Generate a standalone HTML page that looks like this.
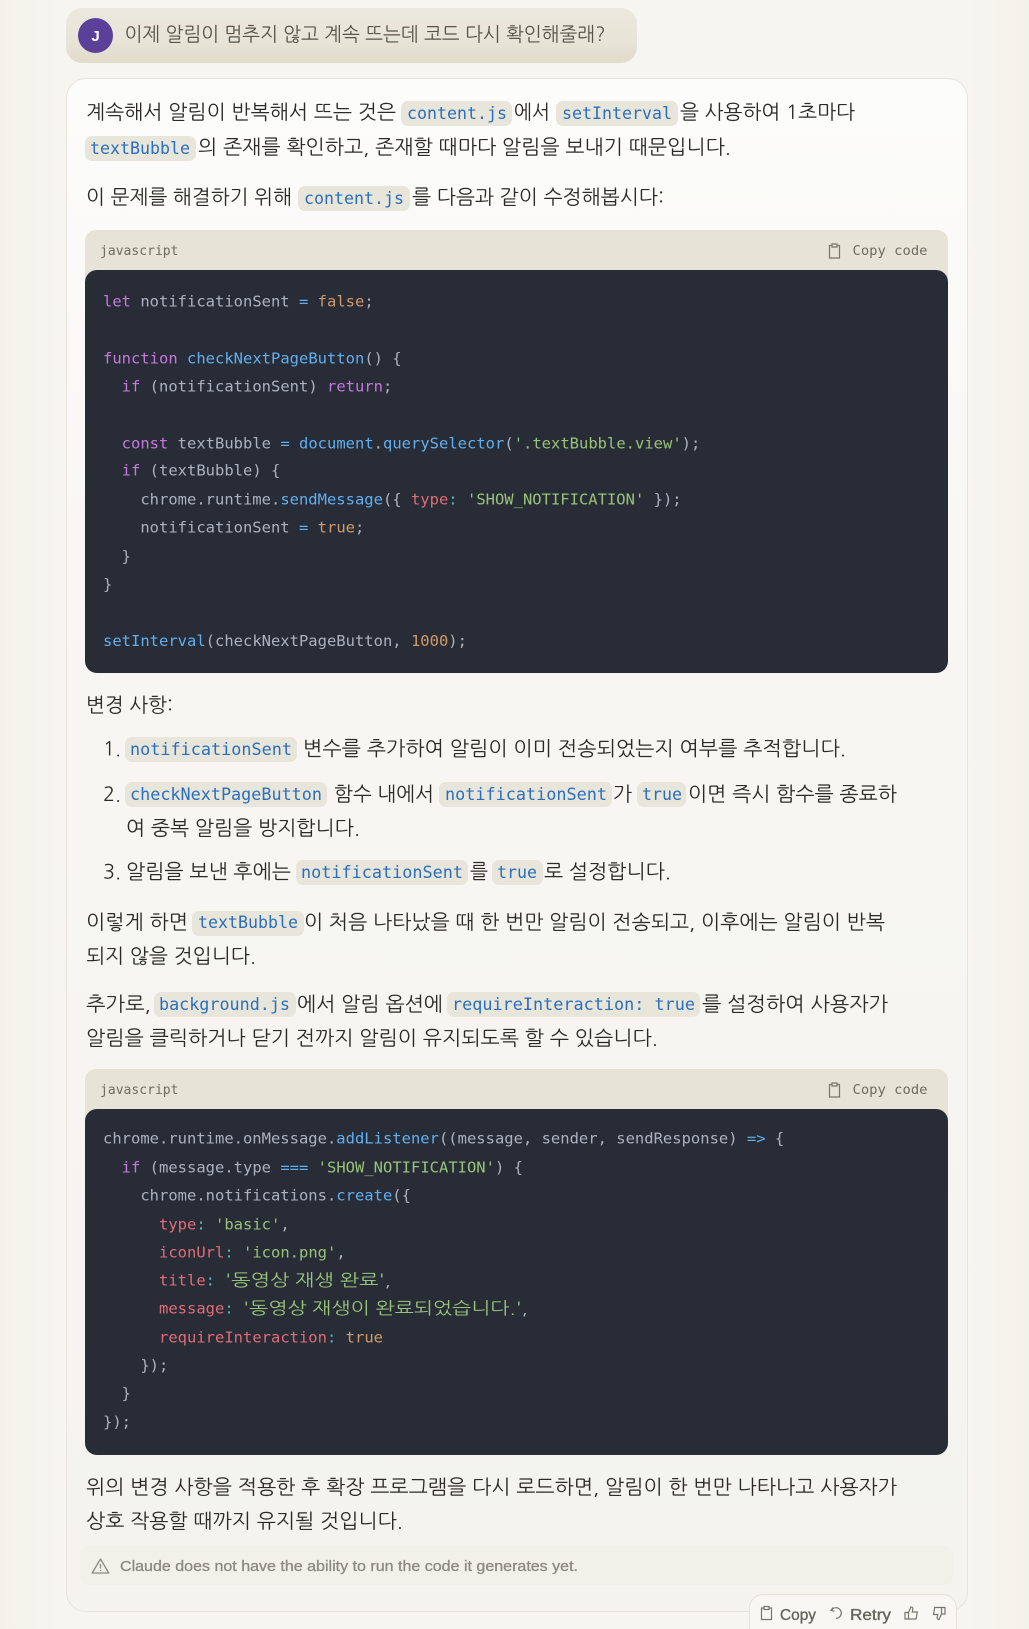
<!DOCTYPE html>
<html lang="ko"><head><meta charset="utf-8"><title>Claude</title>
<style>
html,body{margin:0;padding:0;width:1029px;height:1629px;overflow:hidden;background:#f5f4ee}
#wrap{position:relative;width:1029px;height:1629px;overflow:hidden}
.abs{position:absolute;box-sizing:border-box}
#bg{left:0;top:0;width:1029px;height:1629px;background:linear-gradient(90deg,#f3f2ea 0,#f6f5f0 6%,#f6f5f0 94%,#f3f2ea 100%)}
#bub{left:66px;top:8px;width:571px;height:55px;border-radius:16px;background:linear-gradient(180deg,#ebe8de 0,#e8e4d8 60%,#e0dbca 100%)}
#ava{left:78px;top:18px;width:35px;height:35px;border-radius:50%;background:#5a4099}
#card{left:66px;top:78px;width:902px;height:1534px;border-radius:20px;border:1px solid #e6e4dc;background:linear-gradient(180deg,#fcfcfa 0,#f8f7f4 30%,#f4f3ee 100%)}
.hd{left:85px;width:863px;background:#e7e3d7;border-radius:11px 11px 0 0;height:50px}
.cd{left:85px;width:863px;background:#282c36;border-radius:12px}
.p{position:absolute;background:#e8e5da;border-radius:7px;height:25px}
#warn{left:80px;top:1546px;width:873px;height:39px;border-radius:8px;background:#f1f0e9}
#act{left:749px;top:1594px;width:208px;height:35px;border-radius:14px 14px 0 0;border:1px solid #e3e1d8;border-bottom:0;background:#f8f7f4}
svg{position:absolute;left:0;top:0}
.k{font-family:"NanumGothic","Liberation Sans","Noto Sans CJK KR",sans-serif;font-size:20px;fill:#2b2a26}
.m{font-family:"DejaVu Sans Mono",monospace;font-size:16.5px;fill:#2a6fbd}
.c{font-family:"DejaVu Sans Mono",monospace;font-size:15.5px;fill:#abb2bf;white-space:pre}
.h{font-family:"NanumGothic","Noto Sans CJK KR",sans-serif;font-size:17px;fill:#98c379}
.l{font-family:"DejaVu Sans Mono",monospace;font-size:13px;fill:#6e6d63}
.a{fill:#c678dd}.b{fill:#61afef}.s{fill:#98c379}.n{fill:#d19a66}.r{fill:#e06c75}.o{fill:#56b6c2}
.i{fill:none;stroke:#77766c;stroke-width:1.2}
.t{font-family:"Liberation Sans",sans-serif;font-size:15.5px;fill:#65645c;stroke:#65645c;stroke-width:.35}
</style></head><body><div id="wrap">
<div class="abs" id="bg"></div>
<div class="abs" id="bub"></div>
<div class="abs" id="ava"></div>
<div class="abs" id="card"></div>

<div class="abs hd" style="top:230px"></div>
<div class="abs cd" style="top:270px;height:403px"></div>
<div class="abs hd" style="top:1069px"></div>
<div class="abs cd" style="top:1109px;height:346px"></div>
<div class="abs" id="warn"></div>
<div class="abs" id="act"></div>

<div class="p" style="left:401px;top:101px;width:111px"></div>
<div class="p" style="left:556px;top:101px;width:122px"></div>
<div class="p" style="left:85px;top:136px;width:111px"></div>
<div class="p" style="left:298px;top:186px;width:112px"></div>
<div class="p" style="left:125px;top:737px;width:172px"></div>
<div class="p" style="left:125px;top:782px;width:202px"></div>
<div class="p" style="left:439px;top:782px;width:173px"></div>
<div class="p" style="left:637px;top:782px;width:49px"></div>
<div class="p" style="left:296px;top:860px;width:172px"></div>
<div class="p" style="left:492px;top:860px;width:51px"></div>
<div class="p" style="left:192px;top:911px;width:112px"></div>
<div class="p" style="left:154px;top:992px;width:142px"></div>
<div class="p" style="left:447px;top:992px;width:253px"></div>

<svg width="1029" height="1629" viewBox="0 0 1029 1629" xmlns="http://www.w3.org/2000/svg">
<text x="95.5" y="41" text-anchor="middle" style="font-family:'Liberation Sans',sans-serif;font-size:15px;font-weight:700;fill:#fff">J</text>
<text x="124.5" y="41" class="k" style="font-size:19.5px;fill:#55534a" textLength="481" lengthAdjust="spacingAndGlyphs">이제 알림이 멈추지 않고 계속 뜨는데 코드 다시 확인해줄래?</text>

<text x="86" y="119" class="k" textLength="310" lengthAdjust="spacingAndGlyphs">계속해서 알림이 반복해서 뜨는 것은</text>
<text x="407" y="119" class="m" textLength="100" lengthAdjust="spacingAndGlyphs">content.js</text>
<text x="514" y="119" class="k" textLength="36" lengthAdjust="spacingAndGlyphs">에서</text>
<text x="562" y="119" class="m" textLength="110" lengthAdjust="spacingAndGlyphs">setInterval</text>
<text x="680" y="119" class="k" textLength="175" lengthAdjust="spacingAndGlyphs">을 사용하여 1초마다</text>

<text x="90" y="154" class="m" textLength="100" lengthAdjust="spacingAndGlyphs">textBubble</text>
<text x="198" y="154" class="k" textLength="533" lengthAdjust="spacingAndGlyphs">의 존재를 확인하고, 존재할 때마다 알림을 보내기 때문입니다.</text>

<text x="86" y="204" class="k" textLength="206" lengthAdjust="spacingAndGlyphs">이 문제를 해결하기 위해</text>
<text x="304" y="204" class="m" textLength="100" lengthAdjust="spacingAndGlyphs">content.js</text>
<text x="412" y="204" class="k" textLength="252" lengthAdjust="spacingAndGlyphs">를 다음과 같이 수정해봅시다:</text>

<text x="100" y="255" class="l" textLength="78.5" lengthAdjust="spacingAndGlyphs">javascript</text>
<path class="i" d="M829.5 245.5h2.5v-1.5h5v1.500h2.500v12.500h-10z M832 245.500v1.500h5v-1.500"/>
<text x="852.500" y="255" class="l" textLength="75" lengthAdjust="spacingAndGlyphs">Copy code</text>

<g transform="translate(103,0)">
<text class="c" y="306.500"><tspan class="a">let</tspan> notificationSent <tspan class="b">=</tspan> <tspan class="n">false</tspan>;</text>
<text class="c" y="363.500"><tspan class="a">function</tspan> <tspan class="b">checkNextPageButton</tspan>() {</text>
<text class="c" y="391.500">  <tspan class="a">if</tspan> (notificationSent) <tspan class="a">return</tspan>;</text>
<text class="c" y="448.500">  <tspan class="a">const</tspan> textBubble <tspan class="b">=</tspan> <tspan class="b">document</tspan>.<tspan class="b">querySelector</tspan>(<tspan class="s">'.textBubble.view'</tspan>);</text>
<text class="c" y="475.500">  <tspan class="a">if</tspan> (textBubble) {</text>
<text class="c" y="504.500">    chrome.runtime.<tspan class="b">sendMessage</tspan>({ <tspan class="r">type</tspan><tspan class="o">:</tspan> <tspan class="s">'SHOW_NOTIFICATION'</tspan> });</text>
<text class="c" y="532.500">    notificationSent <tspan class="b">=</tspan> <tspan class="n">true</tspan>;</text>
<text class="c" y="561.500">  }</text>
<text class="c" y="589.500">}</text>
<text class="c" y="646">  <tspan class="b" dx="-18.700">setInterval</tspan>(checkNextPageButton, <tspan class="n">1000</tspan>);</text>

<text class="c" y="1143.500">chrome.runtime.onMessage.<tspan class="b">addListener</tspan>((message, sender, sendResponse) <tspan class="b">=&gt;</tspan> {</text>
<text class="c" y="1172.500">  <tspan class="a">if</tspan> (message.type <tspan class="b">===</tspan> <tspan class="s">'SHOW_NOTIFICATION'</tspan>) {</text>
<text class="c" y="1200.500">    chrome.notifications.<tspan class="b">create</tspan>({</text>
<text class="c" y="1229.500">      <tspan class="r">type</tspan><tspan class="o">:</tspan> <tspan class="s">'basic'</tspan>,</text>
<text class="c" y="1257.500">      <tspan class="r">iconUrl</tspan><tspan class="o">:</tspan> <tspan class="s">'icon.png'</tspan>,</text>
<text class="c" y="1285.500">      <tspan class="r">title</tspan><tspan class="o">:</tspan></text>
<text class="c" y="1313.500">      <tspan class="r">message</tspan><tspan class="o">:</tspan></text>
<text class="c" y="1342.500">      <tspan class="r">requireInteraction</tspan><tspan class="o">:</tspan> <tspan class="n">true</tspan></text>
<text class="c" y="1370.500">    });</text>
<text class="c" y="1398.500">  }</text>
<text class="c" y="1427">});</text>
</g>
<text x="225" y="1286" class="h" textLength="166" lengthAdjust="spacingAndGlyphs">'동영상 재생 완료'<tspan style="fill:#abb2bf">,</tspan></text>
<text x="243" y="1314" class="h" textLength="285" lengthAdjust="spacingAndGlyphs">'동영상 재생이 완료되었습니다.'<tspan style="fill:#abb2bf">,</tspan></text>

<text x="86" y="712" class="k" textLength="87" lengthAdjust="spacingAndGlyphs">변경 사항:</text>
<text x="103" y="755.500" class="k" textLength="18" lengthAdjust="spacingAndGlyphs">1.</text>
<text x="130" y="755" class="m" textLength="162" lengthAdjust="spacingAndGlyphs">notificationSent</text>
<text x="303" y="755.500" class="k" textLength="543" lengthAdjust="spacingAndGlyphs">변수를 추가하여 알림이 이미 전송되었는지 여부를 추적합니다.</text>

<text x="103" y="801" class="k" textLength="18" lengthAdjust="spacingAndGlyphs">2.</text>
<text x="130" y="800" class="m" textLength="192" lengthAdjust="spacingAndGlyphs">checkNextPageButton</text>
<text x="334" y="801" class="k" textLength="100" lengthAdjust="spacingAndGlyphs">함수 내에서</text>
<text x="445" y="800" class="m" textLength="162" lengthAdjust="spacingAndGlyphs">notificationSent</text>
<text x="613" y="801" class="k" textLength="19" lengthAdjust="spacingAndGlyphs">가</text>
<text x="642" y="800" class="m" textLength="40" lengthAdjust="spacingAndGlyphs">true</text>
<text x="688" y="801" class="k" textLength="209" lengthAdjust="spacingAndGlyphs">이면 즉시 함수를 종료하</text>
<text x="126" y="835" class="k" textLength="234" lengthAdjust="spacingAndGlyphs">여 중복 알림을 방지합니다.</text>

<text x="103" y="878.500" class="k" textLength="18" lengthAdjust="spacingAndGlyphs">3.</text>
<text x="126" y="878.500" class="k" textLength="165" lengthAdjust="spacingAndGlyphs">알림을 보낸 후에는</text>
<text x="301" y="878" class="m" textLength="162" lengthAdjust="spacingAndGlyphs">notificationSent</text>
<text x="470" y="878.500" class="k" textLength="18" lengthAdjust="spacingAndGlyphs">를</text>
<text x="497" y="878" class="m" textLength="40" lengthAdjust="spacingAndGlyphs">true</text>
<text x="544" y="878.500" class="k" textLength="127" lengthAdjust="spacingAndGlyphs">로 설정합니다.</text>

<text x="86" y="929" class="k" textLength="102" lengthAdjust="spacingAndGlyphs">이렇게 하면</text>
<text x="198" y="928" class="m" textLength="100" lengthAdjust="spacingAndGlyphs">textBubble</text>
<text x="304" y="929" class="k" textLength="581" lengthAdjust="spacingAndGlyphs">이 처음 나타났을 때 한 번만 알림이 전송되고, 이후에는 알림이 반복</text>
<text x="86" y="963" class="k" textLength="170" lengthAdjust="spacingAndGlyphs">되지 않을 것입니다.</text>

<text x="86" y="1011" class="k" textLength="65" lengthAdjust="spacingAndGlyphs">추가로,</text>
<text x="159" y="1010" class="m" textLength="131" lengthAdjust="spacingAndGlyphs">background.js</text>
<text x="297" y="1011" class="k" textLength="146" lengthAdjust="spacingAndGlyphs">에서 알림 옵션에</text>
<text x="452" y="1010" class="m" textLength="243" lengthAdjust="spacingAndGlyphs">requireInteraction: true</text>
<text x="702" y="1011" class="k" textLength="186" lengthAdjust="spacingAndGlyphs">를 설정하여 사용자가</text>
<text x="86" y="1045" class="k" textLength="572" lengthAdjust="spacingAndGlyphs">알림을 클릭하거나 닫기 전까지 알림이 유지되도록 할 수 있습니다.</text>

<text x="100" y="1094" class="l" textLength="78.500" lengthAdjust="spacingAndGlyphs">javascript</text>
<path class="i" d="M829.5 1084.500h2.500v-1.500h5v1.500h2.500v12.500h-10z M832 1084.500v1.500h5v-1.500"/>
<text x="852.500" y="1094" class="l" textLength="75" lengthAdjust="spacingAndGlyphs">Copy code</text>

<text x="86" y="1494" class="k" textLength="811" lengthAdjust="spacingAndGlyphs">위의 변경 사항을 적용한 후 확장 프로그램을 다시 로드하면, 알림이 한 번만 나타나고 사용자가</text>
<text x="86" y="1528" class="k" textLength="317" lengthAdjust="spacingAndGlyphs">상호 작용할 때까지 유지될 것입니다.</text>

<path d="M100.500 1559 L108.800 1573 H92.200 Z" fill="none" stroke="#8a897f" stroke-width="1.300" stroke-linejoin="round"/>
<path d="M100.500 1564v4.500M100.500 1570v1" stroke="#8a897f" stroke-width="1.300" fill="none"/>
<text x="120" y="1571" style="font-family:'Liberation Sans',sans-serif;font-size:15px;fill:#8b8a80;stroke:#8b8a80;stroke-width:.3" textLength="458" lengthAdjust="spacingAndGlyphs">Claude does not have the ability to run the code it generates yet.</text>

<path class="i" d="M761.500 1608h2.500v-1.500h5v1.500h2.500v11.500h-10z M764 1608v1.500h5v-1.500"/>
<text x="780" y="1620" class="t" textLength="36" lengthAdjust="spacingAndGlyphs">Copy</text>
<path class="i" d="M833 1607.500l-2 3 3.500.8 M831.500 1610.500c1-1.800 2.500-2.800 4.500-2.800a5.300 5.300 0 0 1 0 10.600"/>
<text x="850" y="1620" class="t" textLength="41" lengthAdjust="spacingAndGlyphs">Retry</text>
<path class="i" d="M905 1612.500h3.500v6.500h-3.500z M908.500 1612.500l2.500-5.500c1.500 0 2 1 1.800 2.300l-.5 2.700h5l-1.200 7h-7.600"/>
<path class="i" d="M945 1614h-3.500v-6.500h3.500z M941.500 1614l-2.500 5.500c-1.500 0-2-1-1.800-2.300l.5-2.700h-4.200l1.200-7h6.800"/>
</svg>
</div></body></html>
